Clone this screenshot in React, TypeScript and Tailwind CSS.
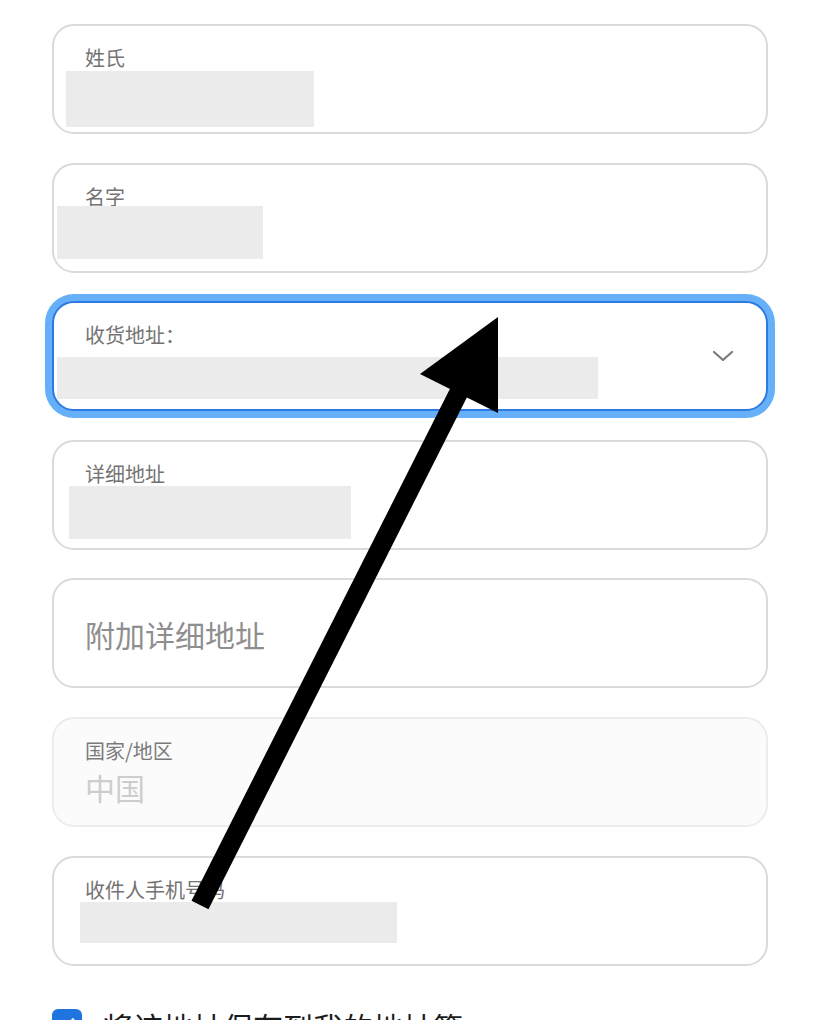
import React from "react"

const font = { fontFamily: '"Noto Sans CJK SC", "Noto Sans", sans-serif' }

type Redact = { left: number; top: number; w: number; h: number }

const Field = ({ label, redact, focused, children }: { label?: string; redact?: Redact; focused?: boolean; children?: React.ReactNode }) => {
  return (
    <div
      className={
        "relative h-[110px] shrink-0 rounded-[22px] bg-white " +
        (focused ? "border-2 border-[#2d7ae0] ring-[7px] ring-[#66b0fa]" : "border-2 border-[#dadada]")
      }
    >
      {label && <p className="pl-[31px] pt-[19px] text-[20px] leading-[26px] text-[#737373]">{label}</p>}
      {children}
      {/* redacted value */}
      {redact && (
        <div
          className="absolute bg-[#ebebeb]"
          style={{ left: redact.left, top: redact.top, width: redact.w, height: redact.h }}
        />
      )}
    </div>
  )
}

const App = () => {
  return (
    <div className="relative w-[820px] h-[1020px] overflow-hidden bg-white" style={font}>
      <div className="flex flex-col gap-[28.6px] px-[52px] pt-[24px]">
        <Field label="姓氏" redact={{ left: 12, top: 45, w: 248, h: 56 }} />
        <Field label="名字" redact={{ left: 3, top: 41, w: 206, h: 53 }} />
        <Field label="收货地址：" focused redact={{ left: 3, top: 54, w: 541, h: 42 }}>
          <svg className="absolute right-[32px] top-1/2 -translate-y-1/2" width="22" height="12" viewBox="0 0 22 12" fill="none">
            <path d="M2 2l9 8 9-8" stroke="#7a7a7a" strokeWidth="2.2" strokeLinecap="round" strokeLinejoin="round" />
          </svg>
        </Field>
        <Field label="详细地址" redact={{ left: 15, top: 44, w: 282, h: 53 }} />
        <div className="flex h-[110px] shrink-0 items-center rounded-[22px] border-2 border-[#dadada] bg-white pl-[31px] pt-[2px]">
          <span className="text-[30px] leading-none text-[#8e8e8e]">附加详细地址</span>
        </div>
        <div className="h-[110px] shrink-0 rounded-[22px] border-2 border-[#ececec] bg-[#fbfbfb]">
          <p className="pl-[31px] pt-[19px] text-[20px] leading-[26px] text-[#7a7a7a]">国家/地区</p>
          <p className="pl-[31px] pt-[6px] text-[30px] leading-[34px] text-[#cdcdcd]">中国</p>
        </div>
        <Field label="收件人手机号码" redact={{ left: 26, top: 44, w: 317, h: 41 }} />
        <div className="mt-[14px] flex items-start gap-[21px]">
          <div className="mt-[1px] flex h-[30px] w-[30px] items-center justify-center rounded-[6px] bg-[#1f74e0]">
            <svg width="18" height="18" viewBox="0 0 18 18" fill="none">
              <path d="M3 9.5l4 4 8-9" stroke="#fff" strokeWidth="2.6" strokeLinecap="round" strokeLinejoin="round" />
            </svg>
          </div>
          <span className="text-[30px] leading-[36px] text-[#1c1c1c]">将该地址保存到我的地址簿</span>
        </div>
      </div>

      {/* annotation arrow */}
      <svg className="pointer-events-none absolute left-0 top-0" width="820" height="1020" viewBox="0 0 820 1020">
        <line x1="200" y1="905" x2="462" y2="386" stroke="#000" strokeWidth="19" />
        <polygon points="498,317 420,374 498,413" fill="#000" />
      </svg>
    </div>
  )
}

export default App
